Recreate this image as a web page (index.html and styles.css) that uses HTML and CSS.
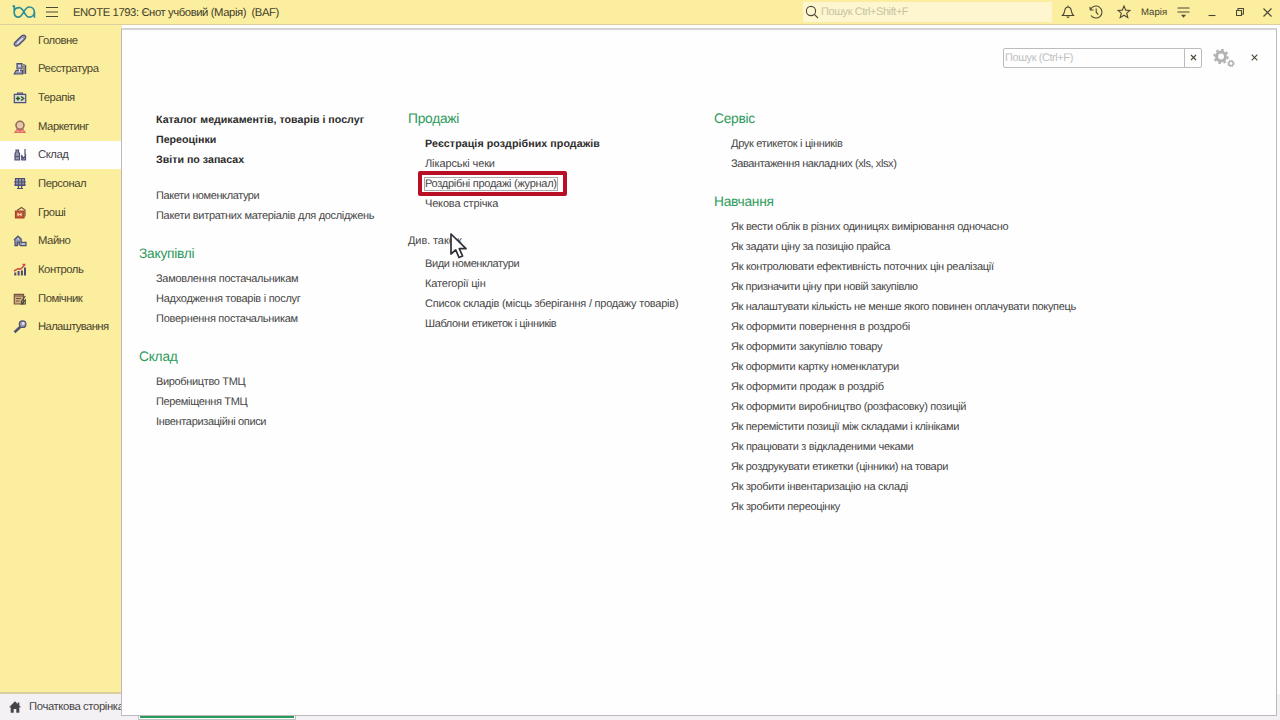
FILE: index.html
```html
<!DOCTYPE html>
<html lang="uk">
<head>
<meta charset="utf-8">
<title>ENOTE</title>
<link rel="stylesheet" href="styles.css">
</head>
<body>
<div class="app">
  <header class="topbar">
    <svg class="logo" width="24" height="14" viewBox="0 0 24 14"><path d="M.6 1.200H2.200V7C2.200 10.300 4 12.200 6.500 12.200C11 12.200 12 2 17.200 2C20.200 2 22.300 4.200 22.300 7.100S20 12.200 17.200 12.200C12.500 12.200 12.300 3 7.300 2.600C5 2.500 3.200 3.500 2.400 5.500M22.400 7V12.800"/></svg>
    <svg class="burger" width="12" height="12" viewBox="0 0 12 12"><path d="M0 1.500H12M0 6H12M0 10.500H12"/></svg>
    <div class="title">ENOTE 1793: Єнот учбовий (Марія)&nbsp; (BAF)</div>
    <div class="search">
      <svg width="14" height="14" viewBox="0 0 14 14"><circle cx="6" cy="6" r="4.6"/><path d="M9.3 9.3L13 13"/></svg>
      <span>Пошук Ctrl+Shift+F</span>
    </div>
    <svg class="bell" width="14" height="14" viewBox="0 0 14 14"><path d="M1.500 10.500H12.500C10.600 8.600 10.600 7.400 10.200 5.200C9.800 3 8.800 2 7 2S4.200 3 3.800 5.200C3.400 7.400 3.400 8.600 1.500 10.500ZM7 .6V2"/><path class="solid" d="M5 11.500H9L7 13.300Z"/></svg>
    <svg class="history" width="14" height="14" viewBox="0 0 14 14"><path d="M1.500 4.500A6 6 0 1 1 2 10.500M.8 1.800L1.400 5H4.600M7.200 3.500V7.200L9.300 9.600"/></svg>
    <svg class="star" width="14" height="14" viewBox="0 0 14 14"><path d="M7 1L8.700 5.100L13.100 5.400L9.700 8.200L10.800 12.600L7 10.200L3.200 12.600L4.300 8.200L.9 5.400L5.300 5.100Z"/></svg>
    <div class="user">Марія</div>
    <svg class="lines" width="13" height="12" viewBox="0 0 13 12"><path d="M.5 2H12.500M.5 6H12.500"/><path class="solid" d="M4 8.800H9L6.500 11.700Z"/></svg>
    <svg class="min" width="8" height="10" viewBox="0 0 8 10"><path d="M.5 8.500H7.500"/></svg>
    <svg class="restore" width="8" height="8" viewBox="0 0 8 8"><path d="M.5 2.500H5.500V7.500H.5ZM2 2.500V.5H7.500V6H5.500"/></svg>
    <svg class="quit" width="9" height="9" viewBox="0 0 9 9"><path d="M.5 .5L8.500 8.500M8.500 .5L.5 8.500"/></svg>
  </header>

  <nav class="sidebar">
    <div class="nav"><svg viewBox="0 0 14 14"><path class="n" d="M2.300 8L8.500 2Q11 .3 12.300 1.800T11.500 5.500L6 10.800Q3.200 13 1.800 11.400T2.300 8"/><path class="l" d="M4 9.800L9.800 4.200"/></svg>Головне</div>
    <div class="nav"><svg viewBox="0 0 14 14"><path class="n" d="M4 1.700H9V7H4ZM3 8.500H9.500V12H1.200ZM11 2V12M12.600 3V12"/><path class="l" d="M5 3.800H8M6.500 7V10"/></svg>Реєстратура</div>
    <div class="nav"><svg viewBox="0 0 14 14"><path class="n pale" d="M1.300 3.300H12.700V11.700H1.300ZM4.500 3V2H9.500V3"/><path class="gr" d="M2.800 7.500H7M4.900 5.500V9.500M8 5.500L10.500 7.500L8 9.500"/></svg>Терапія</div>
    <div class="nav"><svg viewBox="0 0 14 14"><circle class="w" cx="7" cy="5.300" r="4"/><path class="r" d="M2 12.300L4 9.500L7 11L10 9.500L12 12.300Z"/></svg>Маркетинг</div>
    <div class="nav active"><svg viewBox="0 0 14 14"><path class="n" d="M2 12V5.500L3 4V2H5.500V4L6.500 5.500V12ZM2 8.500H6.500M8.700 12V7M12 1V7M9 12V8L10.500 10L12.500 7.500V12Z"/></svg>Склад</div>
    <div class="nav"><svg viewBox="0 0 14 14"><path class="n" d="M2.500 1.500H11.500V8.500H2.500ZM1 5H13M1 8H13M5.500 1V12M8.700 1V12M4 11.500H10"/></svg>Персонал</div>
    <div class="nav"><svg viewBox="0 0 14 14"><path class="rf" d="M2.500 5H11V12H2.500Z"/><path class="b line" d="M4 4.500L8.500 1.500L12 4V10.500"/><path class="y" d="M5 7V10M5 8.500H8M8 7V10"/></svg>Гроші</div>
    <div class="nav"><svg viewBox="0 0 14 14"><path class="n" d="M1 6L5 2L8.200 5V8.300H13V11.600H7M2 6V11.600H4.300V8H6.300V11.600"/><path class="l" d="M9 10H12M4.500 5H6"/></svg>Майно</div>
    <div class="nav"><svg viewBox="0 0 14 14"><path class="bars" d="M2.300 12.500V9.500M5.600 12.500V8M8.900 12.500V7.500M12 12.500V4.500"/><path class="rd" d="M1 8L5 5.700L8 6L12 1.500M9.500 1.500H12.500"/></svg>Контроль</div>
    <div class="nav"><svg viewBox="0 0 14 14"><path class="b" d="M1.300 2.300H10.500V12H1.300ZM1.500 4H10M3 6.500H8M3 9H6.500"/><path class="k" d="M12.300 4L8.500 9.500V12L12.300 8V12H9.500"/></svg>Помічник</div>
    <div class="nav wide"><svg viewBox="0 0 14 14"><path class="shaft" d="M7.500 6.700L1.500 12.300"/><circle class="n" cx="9.600" cy="4.200" r="3.300"/><circle class="l" cx="10.300" cy="3.500" r=".8"/></svg>Налаштування</div>
  </nav>

  <footer class="tabs">
    <svg width="12" height="12" viewBox="0 0 12 12"><path d="M6 .3L0 6.300H1.700V11.700H4.700V8H7.300V11.700H10.300V6.300H12L10.300 4.500V1.500H8.700V3Z"/></svg>
    <span>Початкова сторінка</span>
    <div class="tab"></div>
  </footer>

  <main class="panel">
    <div class="tools">
      <div class="find"><span class="ph">Пошук (Ctrl+F)</span><span class="clear"><svg width="7" height="7" viewBox="0 0 7 7"><path d="M1 1L6 6M6 1L1 6"/></svg></span></div>
      <svg class="gears" width="22" height="20" viewBox="0 0 22 20"><circle cx="8" cy="8.500" r="4.500" stroke-width="3"/><circle cx="8" cy="8.500" r="6.700" stroke-width="2" stroke-dasharray="2.630 2.630"/><circle cx="18" cy="15.500" r="2.200" stroke-width="1.500"/><circle cx="18" cy="15.500" r="3.200" stroke-width="1" stroke-dasharray="1.260 1.260"/></svg>
      <svg class="close" width="7" height="7" viewBox="0 0 7 7"><path d="M.7 .7L6.300 6.300M6.300 .7L.7 6.300"/></svg>
    </div>
    <div class="columns">
      <div class="col">
        <ul class="bold"><li>Каталог медикаментів, товарів і послуг</li><li>Переоцінки</li><li>Звіти по запасах</li></ul>
        <ul class="apart"><li class="k6">Пакети номенклатури</li><li class="k4">Пакети витратних матеріалів для досліджень</li></ul>
        <h2>Закупівлі</h2>
        <ul><li class="k3">Замовлення постачальникам</li><li class="k3">Надходження товарів і послуг</li><li class="k3">Повернення постачальникам</li></ul>
        <h2>Склад</h2>
        <ul><li class="k5">Виробництво ТМЦ</li><li class="k5">Переміщення ТМЦ</li><li class="k5">Інвентаризаційні описи</li></ul>
      </div>
      <div class="col">
        <h2>Продажі</h2>
        <ul><li class="strong">Реєстрація роздрібних продажів</li><li class="k0">Лікарські чеки</li><li class="k3"><span class="focus">Роздрібні продажі (журнал)<i class="mark"></i></span></li><li class="k1">Чекова стрічка</li></ul>
        <h3>Див. також</h3>
        <ul><li class="k6">Види номенклатури</li><li class="k1">Категорії цін</li><li class="k2">Список складів (місць зберігання / продажу товарів)</li><li class="k6">Шаблони етикеток і цінників</li></ul>
      </div>
      <div class="col">
        <h2>Сервіс</h2>
        <ul><li class="k4">Друк етикеток і цінників</li><li class="k6">Завантаження накладних (xls, xlsx)</li></ul>
        <h2>Навчання</h2>
        <ul><li class="k4">Як вести облік в різних одиницях вимірювання одночасно</li><li class="k5">Як задати ціну за позицію прайса</li><li class="k4">Як контролювати ефективність поточних цін реалізації</li><li class="k6">Як призначити ціну при новій закупівлю</li><li class="k5">Як налаштувати кількість не менше якого повинен оплачувати покупець</li><li class="k3">Як оформити повернення в роздробі</li><li class="k3">Як оформити закупівлю товару</li><li class="k5">Як оформити картку номенклатури</li><li class="k2">Як оформити продаж в роздріб</li><li class="k4">Як оформити виробництво (розфасовку) позицій</li><li class="k5">Як перемістити позиції між складами і клініками</li><li class="k4">Як працювати з відкладеними чеками</li><li class="k5">Як роздрукувати етикетки (цінники) на товари</li><li class="k4">Як зробити інвентаризацію на складі</li><li class="k4">Як зробити переоцінку</li></ul>
      </div>
    </div>
  </main>
  <svg class="cursor" width="20" height="28" viewBox="0 0 20 28"><path d="M2 2V22L6.700 17.900L10 25.500L13.600 24L10.300 16.700H17Z"/></svg>
</div>
</body>
</html>
```
FILE: styles.css
```css
* { box-sizing: border-box; }
body { margin: 0; font-family: "Liberation Sans", Arial, sans-serif; font-size: 11px; color: #454545; background: #fefefe; text-rendering: geometricPrecision; }
svg { flex: none; fill: none; stroke: #4c4838; stroke-width: 1.1; }
.app { position: relative; width: 1280px; height: 720px; overflow: hidden; display: grid; grid-template: 25px 1fr 26px / 122px 1fr; }
.topbar { grid-column: 1 / 3; display: flex; align-items: center; background: #fbee9f; border-bottom: 1px solid #dccf9c; color: #44402c; padding-left: 12px; }
.logo { stroke: #2b8f98; stroke-width: 1.7; }
.burger { margin-left: 10px; }
.title { margin-left: 15px; width: 730px; padding-top: 1px; white-space: nowrap; font-size: 11.3px; letter-spacing: -.42px; }
.search { width: 249px; height: 20px; display: flex; align-items: center; gap: 2px; padding-left: 2px; background: #fdf6cf; color: #c8c3a5; letter-spacing: -.43px; }
.bell { margin-left: 9px; }
.history { margin-left: 14px; }
.star { margin-left: 14px; }
.solid { fill: #4c4838; stroke: none; }
.user { margin-left: 10px; width: 26px; font-size: 9.6px; }
.lines { margin-left: 10px; }
.min { margin-left: 18px; }
.restore { margin-left: 20px; }
.quit { margin-left: 19px; }

.sidebar { background: #fbee9f; border-bottom: 2px solid #dacf9f; padding-top: 1px; }
.nav { height: 28.67px; display: flex; align-items: center; gap: 11px; padding: 1px 0 0 13px; color: #4a452e; font-size: 11.3px; letter-spacing: -.47px; }
.nav.wide { letter-spacing: -.64px; }
.nav svg { width: 14px; height: 14px; stroke: #4f5075; stroke-width: 1.2; }
.nav.active { background: #fefefe; color: #45434a; }
.n { fill: #9799ad; }
.n.pale { fill: #dcdbd0; }
.nav .l { stroke: #e8e7ef; }
.nav .gr { stroke: #245c23; stroke-width: 1.6; }
.nav .w { stroke: #93685e; fill: #e8c7a6; stroke-width: 1.6; }
.nav .r { stroke: #df6b62; fill: #f3b4a0; }
.nav .rf { stroke: #a3432f; fill: #c95739; }
.nav .b { stroke: #78543e; fill: #cfad83; }
.nav .line { fill: none; }
.nav .y { stroke: #f4dfaa; }
.nav .bars { stroke: #4f4a72; stroke-width: 2; }
.nav .rd { stroke: #d14c43; stroke-width: 1.5; }
.nav .k { stroke: #4d503c; }
.nav .shaft { stroke-width: 2.6; }

.tabs { grid-column: 1 / 3; grid-row: 3; display: flex; align-items: center; background: #f3f1f4; padding-left: 9px; font-size: 11.3px; letter-spacing: -.38px; white-space: nowrap; }
.tabs svg { fill: #454545; stroke: none; }
.tabs span { margin-left: 8px; width: 109px; padding-bottom: 1px; }
.tab { width: 158px; height: 26px; border: 1px solid #c2c2c4; border-top: 0; background: #fff; padding: 0 1px; }
.tab::before { content: ""; display: block; margin-top: 22px; height: 2px; background: #2a9b58; }

.panel { position: absolute; left: 121px; top: 28px; width: 1156px; height: 688px; background: #fefefe; border: 1px solid #bbb9bb; border-top: 2px solid #d3d2d4; }
.tools { display: flex; align-items: center; height: 55px; padding: 0 18px 0 881px; }
.find { width: 200px; height: 20px; border: 1px solid #bcbcbc; border-radius: 2px; display: flex; align-items: stretch; line-height: 18px; }
.ph { flex: 1; padding-left: 1px; color: #c0c0c0; letter-spacing: -.42px; }
.clear { width: 17px; border-left: 1px solid #bcbcbc; display: flex; align-items: center; justify-content: center; }
.gears { margin-left: 11px; stroke: #b3b1b4; }
.close { margin-left: 16px; }
.columns { display: grid; grid-template-columns: 269px 306px 1fr; padding: 24px 0 0 17px; }
ul { list-style: none; margin: 0; padding: 0 0 0 17px; }
li { height: 20px; line-height: 22px; white-space: nowrap; }
.bold, .strong { font-weight: bold; font-size: 10.67px; color: #2c2c2c; }
.strong { letter-spacing: .07px; }
.k0 { letter-spacing: -.1px; }
.k1 { letter-spacing: -.165px; }
.k2 { letter-spacing: -.23px; }
.k3 { letter-spacing: -.27px; }
.k4 { letter-spacing: -.31px; }
.k5 { letter-spacing: -.35px; }
.k6 { letter-spacing: -.4px; }
.apart { margin-top: 16px; }
h2 { margin: 0; height: 24px; padding-bottom: 4px; line-height: 20px; font-size: 13.8px; letter-spacing: -.27px; font-weight: normal; color: #2f9b5c; }
h3 { margin: 17px 0 1px; height: 22px; line-height: 22px; font-size: 11px; letter-spacing: -.1px; font-weight: normal; }
ul + h2 { margin-top: 19px; }
.focus { position: relative; }
.focus::before { content: ""; position: absolute; inset: -1px; border: 1px solid #aaa; }
.mark { position: absolute; left: -7px; top: -7px; width: 149px; height: 25px; border: 4px solid #b90f25; border-radius: 2px; }
.cursor { position: absolute; left: 448.5px; top: 231.500px; }
.cursor path { fill: #fff; stroke: #323036; stroke-width: 1.7; stroke-linejoin: round; }
```
